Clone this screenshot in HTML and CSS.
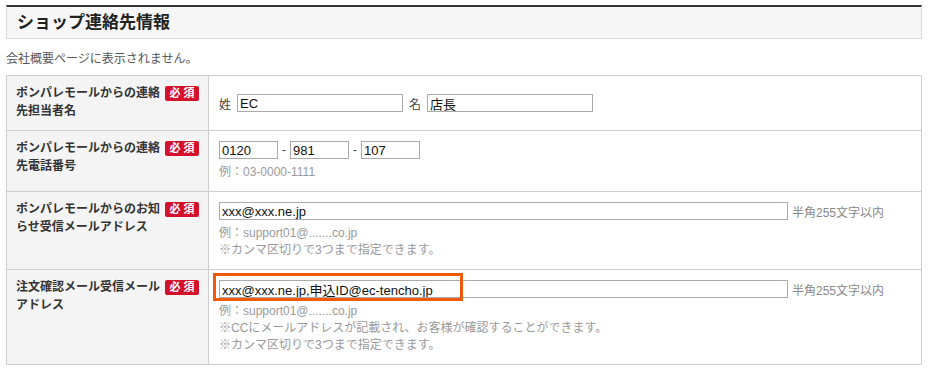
FILE: index.html
```html
<!DOCTYPE html>
<html lang="ja">
<head>
    <meta charset="UTF-8">
    <meta name="viewport" content="width=device-width, initial-scale=1.0">
    <title>ショップ連絡先情報</title>
    <link rel="stylesheet" href="styles.css">
</head>
<body>
<div class="page">
    <h2 class="section-title">ショップ連絡先情報</h2>
    <p class="section-note">会社概要ページに表示されません。</p>

    <table class="form-table">
        <tr class="row-name">
            <th>
                <div class="label-box">
                    <span class="label-text">ポンパレモールからの連絡先担当者名</span>
                    <span class="required">必須</span>
                </div>
            </th>
            <td>
                <div class="field-line">
                    <span class="unit">姓</span><input type="text" class="name-input" value="EC">
                    <span class="unit unit-2">名</span><input type="text" class="name-input" value="店長">
                </div>
            </td>
        </tr>
        <tr>
            <th>
                <div class="label-box">
                    <span class="label-text">ポンパレモールからの連絡先電話番号</span>
                    <span class="required">必須</span>
                </div>
            </th>
            <td>
                <div class="field-line">
                    <input type="text" class="tel-input" value="0120"><span class="dash">-</span><input type="text" class="tel-input" value="981"><span class="dash">-</span><input type="text" class="tel-input" value="107">
                </div>
                <div class="hint">例：03-0000-1111</div>
            </td>
        </tr>
        <tr>
            <th>
                <div class="label-box">
                    <span class="label-text">ポンパレモールからのお知らせ受信メールアドレス</span>
                    <span class="required">必須</span>
                </div>
            </th>
            <td>
                <div class="field-line">
                    <input type="text" class="mail-input" value="xxx@xxx.ne.jp"><span class="limit">半角255文字以内</span>
                </div>
                <div class="hint">例：support01@.......co.jp<br>※カンマ区切りで3つまで指定できます。</div>
            </td>
        </tr>
        <tr>
            <th>
                <div class="label-box">
                    <span class="label-text">注文確認メール受信メールアドレス</span>
                    <span class="required">必須</span>
                </div>
            </th>
            <td>
                <div class="field-line marked">
                    <input type="text" class="mail-input" value="xxx@xxx.ne.jp,申込ID@ec-tencho.jp"><span class="limit">半角255文字以内</span>
                    <span class="highlight"></span>
                </div>
                <div class="hint">例：support01@.......co.jp<br>※CCにメールアドレスが記載され、お客様が確認することができます。<br>※カンマ区切りで3つまで指定できます。</div>
            </td>
        </tr>
    </table>
</div>
</body>
</html>
```

FILE: styles.css
```css
/* ページ全体 */
body {
    margin: 0;
    background-color: white;
    font-family: "Liberation Sans", "Noto Sans CJK JP", sans-serif;
    font-size: 12px;
    color: #333;
}

.page {
    padding: 5px 7px 0 6px;
}

/* 見出し */
.section-title {
    margin: 0;
    height: 31px;
    line-height: 31px;
    padding-left: 10px;
    font-size: 17px;
    font-weight: bold;
    color: #222;
    background-color: #f7f7f7;
    border: 1px solid #d8d8d8;
    border-top: 2px solid #333;
}

.section-note {
    margin: 11px 0 0;
    line-height: 18px;
    color: #555;
}

/* 入力テーブル */
.form-table {
    width: 100%;
    margin-top: 7px;
    border-collapse: collapse;
}

.form-table th,
.form-table td {
    border: 1px solid #cfcfcf;
}

.form-table th {
    width: 183px;
    padding: 8px 9px 9px 9px;
    text-align: left;
    vertical-align: top;
    background-color: #f4f4f4;
}

.form-table td {
    padding: 10px 9px 10px 10px;
    vertical-align: middle;
    background-color: white;
}

.row-name th {
    padding-bottom: 10px;
}

.label-box {
    display: flex;
    align-items: flex-start;
}

.label-text {
    width: 145px;
    line-height: 18px;
    font-weight: bold;
    color: #333;
}

.required {
    margin: 2px 0 0 auto;
    width: 34px;
    height: 15px;
    line-height: 15px;
    font-size: 11px;
    font-weight: bold;
    letter-spacing: 3px;
    text-indent: 3px;
    text-align: center;
    color: white;
    background-color: #d4112c;
    border-radius: 2px;
}

/* 入力欄 */
input {
    box-sizing: border-box;
    height: 18px;
    margin: 0;
    padding: 0 2px;
    font-family: "Liberation Sans", "Noto Sans CJK JP", sans-serif;
    font-size: 13px;
    color: #111;
    border: 1px solid #ababab;
    border-radius: 0;
}

.field-line {
    display: flex;
    align-items: center;
    height: 18px;
}

.unit {
    margin-right: 6px;
    color: #444;
}

.unit-2 {
    margin-left: 6px;
}

.name-input {
    width: 166px;
}

.tel-input {
    width: 59px;
}

.dash {
    width: 12px;
    text-align: center;
    color: #444;
}

.mail-input {
    width: 569px;
}

.limit {
    margin-left: 4px;
    color: #888;
}

.marked {
    position: relative;
}

/* 赤枠（注目） */
.highlight {
    position: absolute;
    left: -6px;
    top: -7px;
    width: 250px;
    height: 28px;
    box-sizing: border-box;
    border: 3px solid #f05a0a;
}

.hint {
    margin-top: 5px;
    line-height: 17px;
    color: #9a9a9a;
}
```
